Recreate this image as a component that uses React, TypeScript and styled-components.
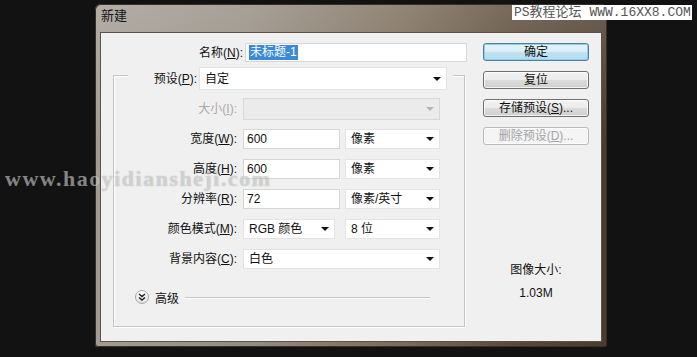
import styled, { createGlobalStyle } from "styled-components";

const GlobalStyle = createGlobalStyle`
  html, body {
    margin: 0;
    padding: 0;
    background: #121212;
  }
  body {
    width: 697px;
    height: 357px;
    overflow: hidden;
    font-family: "Liberation Sans", "Noto Sans CJK SC", sans-serif;
    font-size: 12px;
    color: #111;
  }
`;

const Page = styled.div`
  position: relative;
  width: 697px;
  height: 357px;
  padding: 4px 0 0 95px;
  box-sizing: border-box;
`;

const Window = styled.div`
  width: 512px;
  height: 343px;
  display: flex;
  flex-direction: column;
  box-sizing: border-box;
  padding: 0 5px 5px 5px;
  border-radius: 6px 6px 3px 3px;
  background:
    linear-gradient(to bottom, rgba(255, 255, 255, 0.18), rgba(255, 255, 255, 0) 40%),
    linear-gradient(to right, #a39c93 0%, #958c81 30%, #7a6b5a 60%, #5a4938 82%, #4a3b2c 100%);
  box-shadow: inset 0 0 0 1px #3a2f24;
`;

const TitleBar = styled.div`
  height: 28px;
  display: flex;
  align-items: flex-start;
  padding: 3px 0 0 1px;
  box-sizing: border-box;
  font-family: "Noto Sans CJK SC", sans-serif;
  font-size: 13px;
  line-height: 16px;
  color: #161616;
`;

const Client = styled.div`
  flex: 1;
  display: flex;
  background: #f0f0f0;
  border: 1px solid #5c5348;
  padding-top: 10px;
  box-sizing: border-box;
`;

const LeftCol = styled.div`
  width: 369px;
  display: flex;
  flex-direction: column;
`;

const RightCol = styled.div`
  width: 106px;
  margin-left: 13px;
  display: flex;
  flex-direction: column;
  gap: 10px;
`;

const Label = styled.div<{ $width: number; $disabled?: boolean }>`
  width: ${(p) => p.$width}px;
  text-align: right;
  white-space: nowrap;
  line-height: 16px;
  color: ${(p) => (p.$disabled ? "#a9a9a9" : "#111")};
`;

const NameRow = styled.div`
  display: flex;
  align-items: center;
  height: 19px;
  gap: 2px;
`;

const TextField = styled.div<{ $width: number; $height?: number }>`
  width: ${(p) => p.$width}px;
  height: ${(p) => p.$height ?? 20}px;
  box-sizing: border-box;
  background: #fff;
  border: 1px solid #d6d6d6;
  display: flex;
  align-items: center;
  padding-left: 3px;
  line-height: 14px;
`;

const Selected = styled.span`
  background: #3c8ad6;
  color: #fff;
  padding: 0 1px;
  line-height: 15px;
`;

const Select = styled.div<{ $width: number; $height?: number; $disabled?: boolean }>`
  width: ${(p) => p.$width}px;
  height: ${(p) => p.$height ?? 20}px;
  box-sizing: border-box;
  background: ${(p) => (p.$disabled ? "#ebebeb" : "#fff")};
  border: 1px solid ${(p) => (p.$disabled ? "#d8d8d8" : "#e4e4e4")};
  display: flex;
  align-items: center;
  justify-content: space-between;
  padding: 0 5px 0 5px;
  line-height: 14px;
`;

const Arrow = styled.span<{ $disabled?: boolean }>`
  width: 0;
  height: 0;
  border-style: solid;
  border-width: 4px 4px 0 4px;
  border-color: ${(p) => (p.$disabled ? "#b4b4b4" : "#111")} transparent transparent transparent;
`;

const GroupBox = styled.div`
  margin: 13px 0 0 12px;
  width: 352px;
  height: 252px;
  box-sizing: border-box;
  border: 1px solid #c4c4c4;
  box-shadow: inset 1px 1px 0 #fff, 1px 1px 0 #fff;
  display: flex;
  flex-direction: column;
`;

const PresetRow = styled.div`
  margin: -9px 0 0 14px;
  width: 325px;
  height: 23px;
  padding-right: 6px;
  box-sizing: border-box;
  background: #f0f0f0;
  display: flex;
  align-items: center;
  gap: 2px;
`;

const FieldRow = styled.div<{ $top: number; $height?: number }>`
  margin-top: ${(p) => p.$top}px;
  height: ${(p) => p.$height ?? 20}px;
  display: flex;
  align-items: center;
`;

const Fields = styled.div`
  display: flex;
  gap: 5px;
  margin-left: 6px;
`;

const AdvancedRow = styled.div`
  margin-top: 20px;
  height: 16px;
  display: flex;
  align-items: center;
  padding: 0 34px 0 21px;
  gap: 6px;
`;

const RoundToggle = styled.div`
  width: 14px;
  height: 14px;
  border-radius: 50%;
  box-sizing: border-box;
  border: 1px solid #a6a6a6;
  background: linear-gradient(to bottom, #ffffff, #e2e2e2);
  display: flex;
  align-items: center;
  justify-content: center;
`;

const Rule = styled.div`
  flex: 1;
  height: 1px;
  background: #c6c6c6;
  box-shadow: 0 1px 0 #fff;
`;

const Button = styled.div<{ $primary?: boolean; $disabled?: boolean }>`
  height: 18px;
  box-sizing: border-box;
  border-radius: 3px;
  display: flex;
  align-items: center;
  justify-content: center;
  line-height: 14px;
  border: 1px solid
    ${(p) => (p.$primary ? "#4b7f9e" : p.$disabled ? "#b6babd" : "#707070")};
  color: ${(p) => (p.$disabled ? "#a3a3a3" : "#111")};
  background: ${(p) =>
    p.$primary
      ? "linear-gradient(to bottom, #e6f4fb 0%, #d8eef8 50%, #bfe2f2 51%, #b3dcef 100%)"
      : p.$disabled
      ? "#f4f4f4"
      : "linear-gradient(to bottom, #f3f3f3 0%, #ebebeb 50%, #dcdcdc 51%, #cfcfcf 100%)"};
  box-shadow: ${(p) =>
    p.$primary ? "inset 0 0 0 1px #8fd0ec" : "inset 0 0 0 1px rgba(255,255,255,0.7)"};
`;

const ImageInfo = styled.div`
  margin-top: auto;
  padding-bottom: 41px;
  display: flex;
  flex-direction: column;
  align-items: center;
  gap: 9px;
  line-height: 14px;
`;

const SiteStamp = styled.div`
  position: absolute;
  left: 512px;
  top: 5px;
  width: 180px;
  height: 15px;
  background: #fff;
  color: #555;
  font-family: "Liberation Mono", "Noto Sans CJK SC", monospace;
  font-size: 13px;
  line-height: 15px;
  padding-left: 2px;
  box-sizing: border-box;
  white-space: nowrap;
`;

const WaterMark = styled.div`
  position: absolute;
  left: 5px;
  top: 167px;
  font-family: "Liberation Serif", serif;
  font-weight: bold;
  font-size: 22px;
  letter-spacing: 1.5px;
  line-height: 24px;
  color: rgba(255, 255, 255, 0.5);
  text-shadow: 0 0 1px rgba(0, 0, 0, 0.35);
  white-space: nowrap;
  pointer-events: none;
`;

function ChevronDouble() {
  return (
    <svg width="8" height="8" viewBox="0 0 8 8">
      <path d="M1 1 L4 3.5 L7 1 M1 4.5 L4 7 L7 4.5" fill="none" stroke="#222" strokeWidth="1.4" />
    </svg>
  );
}

const rows = [
  { label: <>宽度(<u>W</u>):</>, value: "600", unit: "像素" },
  { label: <>高度(<u>H</u>):</>, value: "600", unit: "像素" },
  { label: <>分辨率(<u>R</u>):</>, value: "72", unit: "像素/英寸" },
];

export default function App() {
  return (
    <Page>
      <GlobalStyle />
      <Window>
        <TitleBar>新建</TitleBar>
        <Client>
          <LeftCol>
            <NameRow>
              <Label $width={142}>
                名称(<u>N</u>):
              </Label>
              <TextField $width={222} $height={19}>
                <Selected>未标题-1</Selected>
              </TextField>
            </NameRow>
            <GroupBox>
              <PresetRow>
                <Label $width={69}>
                  预设(<u>P</u>):
                </Label>
                <Select $width={248} $height={23}>
                  <span>自定</span>
                  <Arrow />
                </Select>
              </PresetRow>
              <FieldRow $top={8} $height={22}>
                <Label $width={123} $disabled>
                  大小(<u>I</u>):
                </Label>
                <Fields>
                  <Select $width={197} $height={22} $disabled>
                    <span />
                    <Arrow $disabled />
                  </Select>
                </Fields>
              </FieldRow>
              {rows.map((r, i) => (
                <FieldRow key={i} $top={i === 0 ? 9 : 10}>
                  <Label $width={123}>{r.label}</Label>
                  <Fields>
                    <TextField $width={97}>{r.value}</TextField>
                    <Select $width={95}>
                      <span>{r.unit}</span>
                      <Arrow />
                    </Select>
                  </Fields>
                </FieldRow>
              ))}
              <FieldRow $top={10}>
                <Label $width={123}>
                  颜色模式(<u>M</u>):
                </Label>
                <Fields>
                  <Select $width={92}>
                    <span>RGB 颜色</span>
                    <Arrow />
                  </Select>
                  <Select $width={95} style={{ marginLeft: 5 }}>
                    <span>8 位</span>
                    <Arrow />
                  </Select>
                </Fields>
              </FieldRow>
              <FieldRow $top={10}>
                <Label $width={123}>
                  背景内容(<u>C</u>):
                </Label>
                <Fields>
                  <Select $width={197}>
                    <span>白色</span>
                    <Arrow />
                  </Select>
                </Fields>
              </FieldRow>
              <AdvancedRow>
                <RoundToggle>
                  <ChevronDouble />
                </RoundToggle>
                <span>高级</span>
                <Rule />
              </AdvancedRow>
            </GroupBox>
          </LeftCol>
          <RightCol>
            <Button $primary>确定</Button>
            <Button>复位</Button>
            <Button>
              存储预设(<u>S</u>)...
            </Button>
            <Button $disabled>
              删除预设(<u>D</u>)...
            </Button>
            <ImageInfo>
              <span>图像大小:</span>
              <span>1.03M</span>
            </ImageInfo>
          </RightCol>
        </Client>
      </Window>
      <SiteStamp>PS教程论坛 WWW.16XX8.COM</SiteStamp>
      <WaterMark>www.haoyidiansheji.com</WaterMark>
    </Page>
  );
}
